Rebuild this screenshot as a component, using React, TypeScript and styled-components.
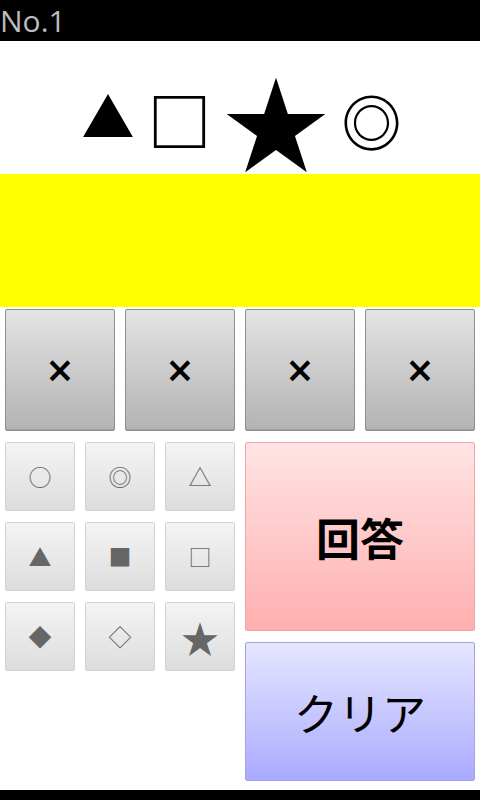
import React from "react";
import styled, { createGlobalStyle } from "styled-components";

const Global = createGlobalStyle`
  html, body { margin: 0; padding: 0; background: #fff; }
  body { font-family: "Open Sans", "Noto Sans CJK JP", sans-serif; }
`;

const Screen = styled.div`
  width: 480px;
  height: 800px;
  display: flex;
  flex-direction: column;
  background: #fff;
  overflow: hidden;
`;

const TitleBar = styled.div`
  height: 41px;
  background: #000;
  color: #bdbdbd;
  font-family: "Open Sans", sans-serif;
  font-size: 30px;
  line-height: 41px;
  padding-left: 0px;
  flex: none;
`;

const ShapeArea = styled.div`
  height: 133px;
  flex: none;
  display: flex;
  align-items: stretch;
  padding-left: 78px;
  font-family: "Noto Sans CJK JP", sans-serif;
  color: #000;
`;

const Glyph = styled.span<{ $size: number; $w: number; $dy: number; $bold?: boolean }>`
  width: ${(p) => p.$w}px;
  display: flex;
  align-items: center;
  justify-content: center;
  font-size: ${(p) => p.$size}px;
  font-weight: ${(p) => (p.$bold ? 700 : 400)};
  line-height: 1;
  padding-top: ${(p) => p.$dy}px;
`;

const Answer = styled.div`
  height: 133px;
  flex: none;
  background: #ffff00;
`;

const XRow = styled.div`
  flex: none;
  display: grid;
  grid-template-columns: repeat(4, 110px);
  column-gap: 10px;
  padding: 2px 5px 0;
  height: 122px;
`;

const BaseButton = styled.button`
  margin: 0;
  padding: 0;
  border-radius: 2px;
  display: flex;
  align-items: center;
  justify-content: center;
  color: #000;
  cursor: pointer;
`;

const XButton = styled(BaseButton)`
  height: 122px;
  border: 1px solid #8e8e8e;
  background: linear-gradient(#e4e4e4, #b3b3b3);
  box-shadow: inset 0 -1px 0 #a0a0a0;
  font-family: "DejaVu Sans", sans-serif;
  font-size: 35px;
  font-weight: 700;
  line-height: 1;
`;

const Lower = styled.div`
  flex: none;
  display: grid;
  grid-template-columns: 230px 230px;
  column-gap: 10px;
  padding: 0 5px;
  margin-top: 11px;
`;

const Pad = styled.div`
  display: grid;
  grid-template-columns: repeat(3, 70px);
  grid-template-rows: repeat(3, 69px);
  column-gap: 10px;
  row-gap: 11px;
  align-content: start;
`;

const SymButton = styled(BaseButton)<{ $size?: number }>`
  border: 1px solid #d2d2d2;
  background: linear-gradient(#f4f4f4, #dddddd);
  color: #666;
  font-family: "Noto Sans CJK JP", sans-serif;
  font-size: ${(p) => p.$size ?? 23}px;
  line-height: 1;
`;

const Actions = styled.div`
  display: flex;
  flex-direction: column;
  gap: 11px;
`;

const ActionButton = styled(BaseButton)<{ $tone: "red" | "blue"; $h: number }>`
  height: ${(p) => p.$h}px;
  border: 1px solid ${(p) => (p.$tone === "red" ? "#eda4a4" : "#a3a3e6")};
  background: ${(p) =>
    p.$tone === "red"
      ? "linear-gradient(#ffe4e4, #ffafaf)"
      : "linear-gradient(#e6e6ff, #aaaaff)"};
  font-family: "Noto Sans CJK JP", sans-serif;
  font-size: 44px;
  font-weight: ${(p) => (p.$tone === "red" ? 700 : 400)};
  line-height: 1;
`;

const Spacer = styled.div`
  flex: 1;
`;

const BottomBar = styled.div`
  height: 10px;
  flex: none;
  background: #000;
`;

const symbols: { ch: string; size?: number }[] = [
  { ch: "○" },
  { ch: "◎" },
  { ch: "△" },
  { ch: "▲" },
  { ch: "■" },
  { ch: "□" },
  { ch: "◆" },
  { ch: "◇" },
  { ch: "★", size: 38 },
];

export default function App() {
  return (
    <>
      <Global />
      <Screen>
        <TitleBar>No.1</TitleBar>
        <ShapeArea>
          <Glyph $size={53} $w={60} $dy={16}>▲</Glyph>
          <Glyph $size={64} $w={83} $dy={21} $bold>□</Glyph>
          <Glyph $size={106} $w={110} $dy={22}>★</Glyph>
          <Glyph $size={60} $w={81} $dy={24} $bold>◎</Glyph>
        </ShapeArea>
        <Answer />
        <XRow>
          {[0, 1, 2, 3].map((i) => (
            <XButton key={i}>×</XButton>
          ))}
        </XRow>
        <Lower>
          <Pad>
            {symbols.map((s, i) => (
              <SymButton key={i} $size={s.size}>
                {s.ch}
              </SymButton>
            ))}
          </Pad>
          <Actions>
            <ActionButton $tone="red" $h={189}>
              回答
            </ActionButton>
            <ActionButton $tone="blue" $h={139}>
              クリア
            </ActionButton>
          </Actions>
        </Lower>
        <Spacer />
        <BottomBar />
      </Screen>
    </>
  );
}
